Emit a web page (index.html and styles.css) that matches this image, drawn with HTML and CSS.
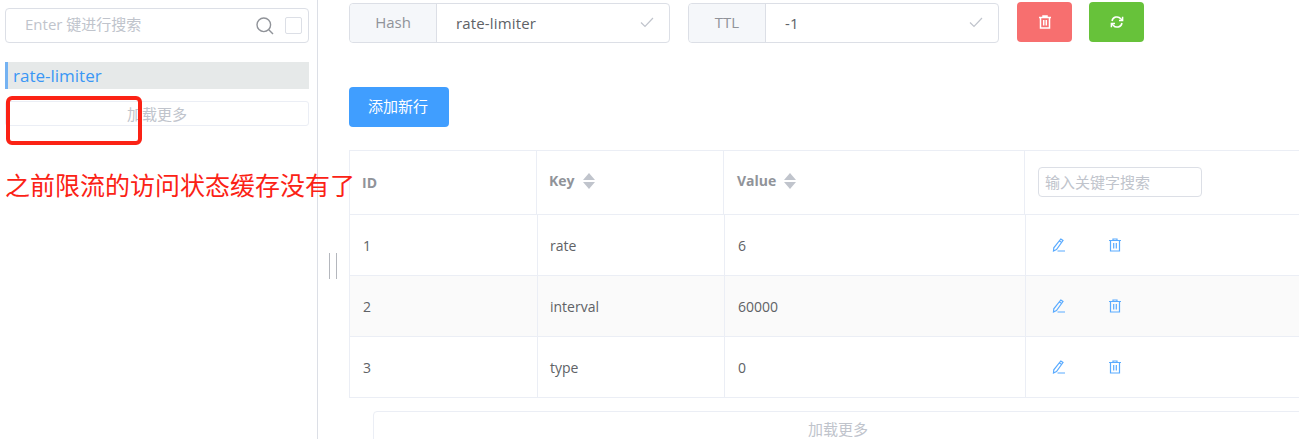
FILE: index.html
```html
<!DOCTYPE html>
<html lang="zh">
<head>
<meta charset="utf-8">
<title>Redis</title>
<link rel="stylesheet" href="styles.css">
</head>
<body>
<div class="app">
  <aside class="aside">
    <div class="search">
      <span class="search-text">Enter 键进行搜索</span>
      <svg class="search-icon" viewBox="0 0 18 18"><circle cx="7.800" cy="7.800" r="6.800"/><path d="M12.800 12.800 17 17"/></svg>
      <span class="check"></span>
    </div>
    <div class="key-item">rate-limiter</div>
    <div class="more more-left">加载更多</div>
  </aside>
  <div class="resizer"></div>
  <main class="main">
    <div class="toolbar">
      <div class="group group-hash">
        <span class="prepend">Hash</span>
        <span class="value">rate-limiter</span>
        <svg class="tick" viewBox="0 0 14 11"><path d="M1 5.500 5 9.500 13 1"/></svg>
      </div>
      <div class="group group-ttl">
        <span class="prepend">TTL</span>
        <span class="value">-1</span>
        <svg class="tick" viewBox="0 0 14 11"><path d="M1 5.500 5 9.500 13 1"/></svg>
      </div>
      <button class="btn btn-danger">
        <svg class="icon-trash" viewBox="0 0 14 14"><path d="M1 2.500h12M5 2.500V1h4v1.500M2.500 2.500V13h9V2.500M5.700 5v5.500M8.300 5v5.500"/></svg>
      </button>
      <button class="btn btn-success">
        <svg class="icon-refresh" viewBox="0 0 14 14"><path d="M2 6a5 5 0 0 1 8.800-2.200L12 5M12 8a5 5 0 0 1-8.800 2.200L2 9"/><path d="M12.600 1.800V5.500H9M1.400 12.200V8.500H5"/></svg>
      </button>
    </div>
    <button class="add">添加新行</button>
    <div class="table">
      <div class="row head">
        <div class="cell c1 id-head">ID</div>
        <div class="cell c2"><span class="sort-label">Key</span><span class="sort"></span></div>
        <div class="cell c3"><span class="sort-label">Value</span><span class="sort"></span></div>
        <div class="cell c4"><span class="filter">输入关键字搜索</span></div>
      </div>
      <div class="row body-row">
        <div class="cell c1">1</div><div class="cell c2">rate</div><div class="cell c3">6</div>
        <div class="cell c4 actions">
          <svg class="a-edit" viewBox="0 0 14 14"><path d="M8.800 1 11 2.500 4.500 11.500 1.500 13 1.800 9.800ZM7.500 3 10 4.800M5.500 13H13"/></svg>
          <svg class="a-trash" viewBox="0 0 14 14"><path d="M1 2.500h12M5 2.500V1h4v1.500M2.500 2.500V13h9V2.500M5.700 5v5.500M8.300 5v5.500"/></svg>
        </div>
      </div>
      <div class="row body-row striped">
        <div class="cell c1">2</div><div class="cell c2">interval</div><div class="cell c3">60000</div>
        <div class="cell c4 actions">
          <svg class="a-edit" viewBox="0 0 14 14"><path d="M8.800 1 11 2.500 4.500 11.500 1.500 13 1.800 9.800ZM7.500 3 10 4.800M5.500 13H13"/></svg>
          <svg class="a-trash" viewBox="0 0 14 14"><path d="M1 2.500h12M5 2.500V1h4v1.500M2.500 2.500V13h9V2.500M5.700 5v5.500M8.300 5v5.500"/></svg>
        </div>
      </div>
      <div class="row body-row">
        <div class="cell c1">3</div><div class="cell c2">type</div><div class="cell c3">0</div>
        <div class="cell c4 actions">
          <svg class="a-edit" viewBox="0 0 14 14"><path d="M8.800 1 11 2.500 4.500 11.500 1.500 13 1.800 9.800ZM7.500 3 10 4.800M5.500 13H13"/></svg>
          <svg class="a-trash" viewBox="0 0 14 14"><path d="M1 2.500h12M5 2.500V1h4v1.500M2.500 2.500V13h9V2.500M5.700 5v5.500M8.300 5v5.500"/></svg>
        </div>
      </div>
    </div>
    <div class="more more-main">加载更多</div>
  </main>
  <div class="mark-box"></div>
  <div class="mark-text">之前限流的访问状态缓存没有了</div>
</div>
</body>
</html>
```
FILE: styles.css
```css
* { box-sizing: border-box; }
html, body { margin: 0; height: 100%; background: #fff; overflow: hidden; }
body { font-family: "Open Sans", "Noto Sans CJK SC", sans-serif; color: #606266; font-size: 14px; }
button { font: inherit; border: 0; padding: 0; }
.app { position: relative; display: flex; width: 1299px; height: 439px; overflow: hidden; }

.aside { width: 318px; flex: none; border-right: 1px solid #dcdfe6; padding: 8px 8px 0 5px; }
.search { display: flex; align-items: center; height: 35px; border: 1px solid #dcdfe6; border-radius: 4px; padding-left: 19px; }
.search-text { flex: 1; color: #c0c4cc; font-size: 15px; line-height: 33px; position: relative; top: -1px; }
.search-icon { width: 18px; height: 18px; fill: none; stroke: #909399; stroke-width: 1.4; margin-right: 11px; }
.check { width: 17px; height: 17px; border: 1px solid #dcdfe6; border-radius: 2px; margin-right: 6px; }
.key-item { margin-top: 19px; height: 27px; line-height: 28px; background: #e6e9e9; border-left: 3px solid #74b2f2; padding-left: 5px; color: #3a97f5; font-size: 17px; }
.more { border: 1px solid #ebeef5; border-radius: 3px; color: #c0c4cc; text-align: center; font-size: 15px; }
.more-left { margin-top: 12px; height: 25px; line-height: 24px; }

.resizer { width: 31px; flex: none; position: relative; }
.resizer::after { content: ""; position: absolute; left: 11px; top: 253px; width: 6px; height: 26px; border-left: 1px solid #b4b7bd; border-right: 1px solid #b4b7bd; }

.main { flex: none; width: 954px; }
.toolbar { display: flex; align-items: flex-start; height: 87px; padding-top: 2px; }
.group { display: flex; align-items: center; height: 40px; margin-top: 1px; border: 1px solid #dcdfe6; border-radius: 4px; position: relative; }
.group-hash { width: 321px; margin-right: 18px; }
.group-ttl { width: 311px; margin-right: 18px; }
.prepend { height: 100%; background: #f5f7fa; border-right: 1px solid #dcdfe6; border-radius: 4px 0 0 4px; color: #909399; display: flex; align-items: center; justify-content: center; font-size: 15px; padding-bottom: 2px; }
.group-hash .prepend { width: 87px; }
.group-ttl .prepend { width: 77px; }
.value { flex: 1; padding-left: 19px; font-size: 15px; letter-spacing: 0.15px; }
.tick { width: 14px; height: 11px; fill: none; stroke: #c0c4cc; stroke-width: 1.2; margin-right: 15px; position: relative; top: -1px; }
.btn { display: flex; align-items: center; justify-content: center; width: 55px; height: 40px; border-radius: 4px; }
.btn-danger { background: #f76f6f; margin-right: 17px; }
.btn-success { background: #67c23a; }
.icon-trash, .icon-refresh { width: 14px; height: 14px; fill: none; stroke: #fff; stroke-width: 1.5; }
.add { display: block; width: 100px; height: 40px; padding: 0 2px 4px 0; background: #409eff; color: #fff; border-radius: 4px; font-size: 15px; }

.table { margin-top: 23px; width: 960px; border-top: 1px solid #ebeef5; border-left: 1px solid #ebeef5; }
.row { display: flex; border-bottom: 1px solid #ebeef5; }
.head { height: 64px; }
.body-row { height: 61px; }
.striped { background: #fafafa; }
.cell { display: flex; align-items: center; padding-left: 12px; border-right: 1px solid #ebeef5; font-size: 14px; }
.c1 { width: 187px; }
.c2 { width: 187px; }
.c3 { width: 301px; padding-left: 13px; }
.c4 { flex: 1; border-right: 0; padding-left: 13px; }
.body-row .c1 { width: 188px; padding-left: 13px; }
.head .cell { color: #909399; font-weight: 700; }
.sort-label { position: relative; top: -2px; }
.sort { position: relative; top: -2px; width: 13px; height: 16px; margin-left: 8px; }
.sort::before, .sort::after { content: ""; position: absolute; left: 0; border-left: 6.500px solid transparent; border-right: 6.500px solid transparent; }
.sort::before { top: 0; border-bottom: 7px solid #c0c4cc; }
.sort::after { bottom: 0; border-top: 7px solid #c0c4cc; }
.filter { width: 164px; height: 30px; line-height: 29px; margin-bottom: 2px; border: 1px solid #dcdfe6; border-radius: 4px; padding-left: 6px; color: #c0c4cc; font-weight: 400; font-size: 15px; }
.actions { padding-left: 26px; }
.a-edit, .a-trash { width: 14px; height: 14px; fill: none; stroke: #5aabff; stroke-width: 1.200; }
.a-trash { margin-left: 42px; }
.more-main { margin: 13px 0 0 24px; width: 930px; height: 40px; line-height: 34px; border-radius: 4px; }

.mark-box { position: absolute; left: 6px; top: 96px; width: 136px; height: 49px; border: 4px solid #fb2215; border-radius: 6px; }
.mark-text { position: absolute; left: 5px; top: 167px; font-size: 25px; line-height: 36px; color: #fb2215; white-space: nowrap; }
```
